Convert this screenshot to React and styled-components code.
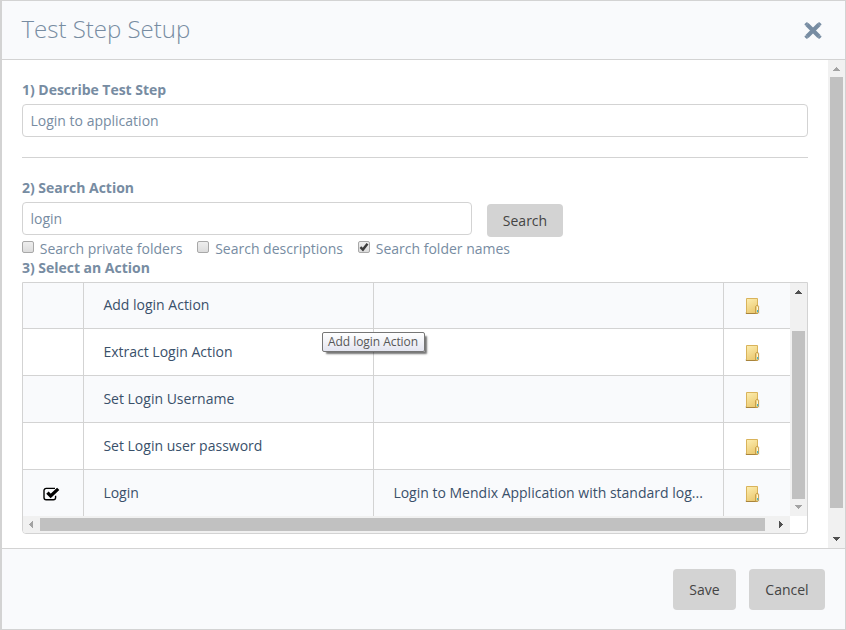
import React from "react";
import styled, { createGlobalStyle, css } from "styled-components";

const line = "#d3d3d3";
const slate = "#778ca2";
const tint = "#f9fafc";

const GlobalStyle = createGlobalStyle`
  *, *::before, *::after { box-sizing: border-box; }
  body {
    margin: 0;
    background: #fff;
    color: ${slate};
    font: 14px/20px "Open Sans", sans-serif;
  }
`;

const Dialog = styled.div`
  position: relative;
  display: flex;
  flex-direction: column;
  width: 846px;
  height: 630px;
  border: 1px solid ${line};
  border-left-width: 2px;
  overflow: hidden;
`;

const Header = styled.header`
  display: flex;
  justify-content: space-between;
  align-items: flex-start;
  height: 59px;
  padding: 11px 23px 0 19.5px;
  border-bottom: 1px solid ${line};
  background: ${tint};
`;

const Title = styled.h1`
  margin: 0;
  font-size: 24px;
  font-weight: 300;
  line-height: 34px;
`;

const CloseButton = styled.button`
  display: flex;
  margin: 10px 0 0;
  padding: 0;
  border: 0;
  background: none;
  color: ${slate};
`;

const Body = styled.div`
  display: flex;
  height: 488px;
`;

const Content = styled.main`
  flex: 1;
  display: flex;
  flex-direction: column;
  padding: 20px 20px 0;
`;

const Heading = styled.h2`
  margin: 0;
  font-size: 14px;
  font-weight: 700;
  line-height: 20px;
  letter-spacing: -0.02px;
`;

const Field = styled.input`
  display: block;
  width: ${(p) => p.$width};
  height: 33px;
  padding: 0 7.5px;
  border: 1px solid ${line};
  border-radius: 4px;
  outline: 0;
  background: #fff;
  color: ${slate};
  font: 14px/20px "Open Sans", sans-serif;
`;

const DescribeField = styled(Field)`
  margin-top: 4px;
`;

const Divider = styled.hr`
  width: 100%;
  height: 1px;
  margin: 20px 0;
  border: 0;
  background: ${line};
`;

const SearchRow = styled.div`
  display: flex;
  align-items: flex-start;
  gap: 15px;
  height: 37px;
  margin-top: 4px;
`;

const Button = styled.button`
  height: ${(p) => p.$height}px;
  width: ${(p) => p.$width}px;
  margin: ${(p) => (p.$drop ? `${p.$drop}px 0 0` : 0)};
  padding: 0;
  border: 0;
  border-radius: 4px;
  background: ${line};
  color: #444;
  font: 14px/20px "Open Sans", sans-serif;
`;

const Options = styled.div`
  display: flex;
  gap: 15px;
  height: 19px;
`;

const Option = styled.label`
  display: flex;
  gap: 5.8px;
  line-height: 20px;
  white-space: nowrap;
`;

const Box = styled.span`
  display: flex;
  flex: none;
  width: 12px;
  height: 12px;
  margin-top: 2px;
  border: 1px solid #a8a8a8;
  border-radius: 2px;
  background: linear-gradient(#eee, #dcdcdc);
`;

const Panel = styled.section`
  display: grid;
  grid-template-columns: 767px 17px;
  grid-template-rows: 233px 17px;
  width: 786px;
  height: 252px;
  margin-top: 4px;
  border: 1px solid ${line};
  border-radius: 0 0 4px 4px;
  overflow: hidden;
`;

const Rows = styled.div`
  overflow: hidden;
`;

const Row = styled.div`
  display: grid;
  grid-template-columns: 61px 290px 350px 1fr;
  height: ${(p) => (p.$first ? 46 : 47)}px;
  border-bottom: 1px solid ${line};
  background: ${(p) => (p.$shaded ? tint : "#fff")};
`;

const Cell = styled.div`
  display: flex;
  align-items: flex-start;
  padding: ${(p) => (p.$first ? 12 : 13)}px 18px 0 19.4px;
  color: #39506a;
  white-space: nowrap;

  &:not(:last-child) {
    border-right: 1px solid ${line};
  }
`;

const MarkSvg = styled.svg`
  display: block;
  flex: none;
  margin: 4px 0 0 0.6px;
`;

const FolderSvg = styled.svg`
  display: block;
  flex: none;
  margin: 2px 0 0 1.6px;
`;

const Track = styled.div`
  display: flex;
  flex-direction: ${(p) => (p.$horizontal ? "row" : "column")};
  align-items: center;
  flex: none;
  background: #f1f1f1;
  ${(p) => (p.$horizontal ? css`height: 17px;` : css`width: 17px;`)}
`;

const Arrow = styled.svg`
  display: block;
  flex: none;
`;

const Thumb = styled.div`
  flex: none;
  background: #c1c1c1;
  ${(p) =>
    p.$horizontal
      ? css`width: ${p.$size}px; height: 13px; margin-right: auto; margin-left: ${p.$offset}px;`
      : css`height: ${p.$size}px; width: 13px; margin-bottom: auto; margin-top: ${p.$offset}px;`}
`;

const Footer = styled.footer`
  display: flex;
  justify-content: flex-end;
  gap: 13px;
  flex: 1;
  padding: 20px 20px 0;
  border-top: 1px solid ${line};
  background: ${tint};
`;

const Tooltip = styled.div`
  position: absolute;
  left: 320px;
  top: 331px;
  width: 103px;
  height: 20px;
  padding-left: 5px;
  border: 1px solid #767676;
  border-radius: 2px;
  background: linear-gradient(#fff, #e4e5f0);
  box-shadow: 3px 3px 2px -1px rgba(0, 0, 0, 0.55);
  color: #575757;
  font: 12px/18px "Open Sans", sans-serif;
  letter-spacing: -0.05px;
  white-space: nowrap;
`;

const arrowPaths = {
  up: "M8 7h1v1h1v1h1v1h1v1h-7v-1h1v-1h1v-1h1z",
  down: "M5 6h7v1h-1v1h-1v1h-1v1h-1v-1h-1v-1h-1v-1h-1z",
  left: "M10 5v7h-1v-1h-1v-1h-1v-1h-1v-1h1v-1h1v-1h1v-1z",
  right: "M6 5v7h1v-1h1v-1h1v-1h1v-1h-1v-1h-1v-1h-1v-1z",
};

function ScrollArrow({ direction, enabled }) {
  return (
    <Arrow width="17" height="17" viewBox="0 0 17 17" shapeRendering="crispEdges">
      <path d={arrowPaths[direction]} fill={enabled ? "#505050" : "#a3a3a3"} />
    </Arrow>
  );
}

function ScrollBar({ horizontal, size, offset = 0, back, forward }) {
  return (
    <Track $horizontal={horizontal}>
      <ScrollArrow direction={horizontal ? "left" : "up"} enabled={back} />
      <Thumb $horizontal={horizontal} $size={size} $offset={offset} />
      <ScrollArrow direction={horizontal ? "right" : "down"} enabled={forward} />
    </Track>
  );
}

function CloseIcon() {
  return (
    <svg width="18" height="18" viewBox="0 0 18 18" stroke="currentColor" fill="currentColor">
      <path d="M3 2.5 15 14.5M15 2.5 3 14.5" strokeWidth="4.2" />
      <path
        d="M2.9 1.2 1.6 2.5M15.1 1.2 16.4 2.5M1.6 14.5 2.9 15.8M16.4 14.5 15.1 15.8"
        strokeWidth="2"
        strokeLinecap="round"
      />
    </svg>
  );
}

function SelectedMark() {
  return (
    <MarkSvg width="17" height="15" viewBox="0 0 17 15" fill="none" stroke="#000">
      <path
        d="M12 1.4H3.2a2.2 2.2 0 0 0-2.2 2.2v7a2.2 2.2 0 0 0 2.2 2.2h7.2a2.2 2.2 0 0 0 2.2-2.2V8.8"
        strokeWidth="1.4"
      />
      <path d="M4.4 5.6 7.7 8.9 15.2 1.9" strokeWidth="3.3" />
    </MarkSvg>
  );
}

function FolderIcon() {
  return (
    <FolderSvg width="16" height="17" viewBox="0 0 16 17">
      <defs>
        <linearGradient id="folderFace" x1="0" y1="0" x2="0.4" y2="1">
          <stop offset="0" stopColor="#fdeeb0" />
          <stop offset="1" stopColor="#eccb74" />
        </linearGradient>
      </defs>
      <path d="M0 15.5h14.5v.9H0z" fill="#b9b5a6" opacity=".5" />
      <path d="M1.5 1.5h11v15h-11z" fill="url(#folderFace)" stroke="#d9b35b" />
      <path d="M1 16h11v1H1z" fill="#a8843c" />
      <path d="M10.6 16.3V9.6l1-1.2h1.3l.7 1v6l-1.2 1z" fill="#f3d98c" stroke="#bf9440" strokeWidth=".9" />
      <path d="M12 10h1v3h-1z" fill="#fff6d8" />
      <path d="M12 13h1.2v2.2H12z" fill="#45b5cf" />
    </FolderSvg>
  );
}

function CheckOption({ checked, children }) {
  return (
    <Option>
      <Box>
        {checked && (
          <svg width="10" height="10" viewBox="0 0 10 10">
            <path d="M1.4 5.2 3.9 7.6 8.5 1.8" fill="none" stroke="#3c3c3c" strokeWidth="2.4" />
          </svg>
        )}
      </Box>
      {children}
    </Option>
  );
}

const actions = [
  { name: "Add login Action" },
  { name: "Extract Login Action" },
  { name: "Set Login Username" },
  { name: "Set Login user password" },
  {
    name: "Login",
    description: "Login to Mendix Application with standard log...",
    selected: true,
  },
];

function ActionRow({ action, index }) {
  const first = index === 0;
  return (
    <Row $first={first} $shaded={index % 2 === 0}>
      <Cell $first={first}>{action.selected && <SelectedMark />}</Cell>
      <Cell $first={first}>{action.name}</Cell>
      <Cell $first={first}>{action.description}</Cell>
      <Cell $first={first}>
        <FolderIcon />
      </Cell>
    </Row>
  );
}

export default function App() {
  return (
    <>
      <GlobalStyle />
      <Dialog>
        <Header>
          <Title>Test Step Setup</Title>
          <CloseButton aria-label="Close">
            <CloseIcon />
          </CloseButton>
        </Header>
        <Body>
          <Content>
            <Heading>1) Describe Test Step</Heading>
            <DescribeField $width="100%" defaultValue="Login to application" />
            <Divider />
            <Heading>2) Search Action</Heading>
            <SearchRow>
              <Field $width="450px" defaultValue="login" />
              <Button $width={76} $height={33} $drop={2}>Search</Button>
            </SearchRow>
            <Options>
              <CheckOption>Search private folders</CheckOption>
              <CheckOption>Search descriptions</CheckOption>
              <CheckOption checked>Search folder names</CheckOption>
            </Options>
            <Heading>3) Select an Action</Heading>
            <Panel>
              <Rows>
                {actions.map((action, index) => (
                  <ActionRow key={action.name} action={action} index={index} />
                ))}
              </Rows>
              <ScrollBar size={168} offset={31} back />
              <ScrollBar horizontal size={725} forward />
            </Panel>
          </Content>
          <ScrollBar size={431} forward />
        </Body>
        <Footer>
          <Button $width={63} $height={41}>Save</Button>
          <Button $width={76} $height={41}>Cancel</Button>
        </Footer>
        <Tooltip>Add login Action</Tooltip>
      </Dialog>
    </>
  );
}
